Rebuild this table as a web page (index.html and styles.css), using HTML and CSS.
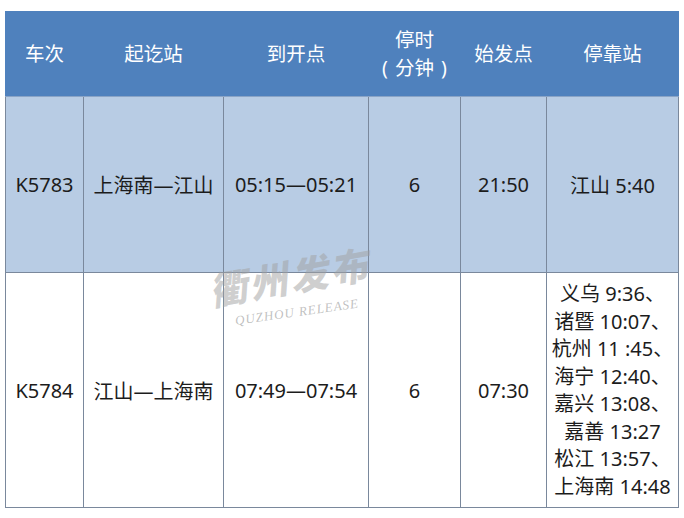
FILE: index.html
```html
<!DOCTYPE html>
<html lang="zh-CN">
<head>
<meta charset="utf-8">
<title>K5783 / K5784</title>
<link rel="stylesheet" href="styles.css">
</head>
<body>
<div class="wrap">
  <table class="tt">
    <colgroup>
      <col class="c1"><col class="c2"><col class="c3"><col class="c4"><col class="c5"><col class="c6">
    </colgroup>
    <thead>
      <tr class="head">
        <th>车次</th>
        <th>起讫站</th>
        <th>到开点</th>
        <th>停时<br><span class="paren">(</span> 分钟 <span class="paren">)</span></th>
        <th>始发点</th>
        <th>停靠站</th>
      </tr>
    </thead>
    <tbody>
      <tr class="r1">
        <td>K5783</td>
        <td>上海南—江山</td>
        <td>05:15—05:21</td>
        <td>6</td>
        <td>21:50</td>
        <td>江山 5:40</td>
      </tr>
      <tr class="r2">
        <td>K5784</td>
        <td>江山—上海南</td>
        <td>07:49—07:54</td>
        <td>6</td>
        <td>07:30</td>
        <td class="stops">义乌 9:36、<br>诸暨 10:07、<br>杭州 11&nbsp;:45、<br>海宁 12:40、<br>嘉兴 13:08、<br>嘉善 13:27<br>松江 13:57、<br>上海南 14:48</td>
      </tr>
    </tbody>
  </table>
  <div class="wm">
    <div class="wm-cn">衢州发布</div>
    <div class="wm-en">QUZHOU RELEASE</div>
  </div>
</div>
</body>
</html>
```

FILE: styles.css
```css
html, body {
  margin: 0;
  padding: 0;
  background: #ffffff;
}

.wrap {
  position: relative;
  padding: 11px 0 0 5px;
  width: 684px;
  height: 518px;
  box-sizing: border-box;
}

.tt {
  border-collapse: collapse;
  table-layout: fixed;
  width: 673px;
  font-family: "Noto Sans", "Noto Sans CJK SC", sans-serif;
  font-size: 20px;
  color: #1c1c1c;
}

.c1 { width: 78px; }
.c2 { width: 140px; }
.c3 { width: 145px; }
.c4 { width: 92px; }
.c5 { width: 86px; }
.c6 { width: 132px; }

.tt th,
.tt td {
  border: 1px solid #7a889c;
  text-align: center;
  vertical-align: middle;
  padding: 0;
  white-space: nowrap;
}

.head th {
  background: #4f81bd;
  color: #ffffff;
  font-weight: normal;
  font-size: 19.5px;
  height: 84px;
  line-height: 28px;
  border-color: #4f81bd;
  border-bottom-color: #8aa4c6;
}

.paren {
  display: inline-block;
  padding: 0 2px;
}

.r1 td {
  background: #b8cce4;
  height: 175px;
}

.r2 td {
  background: #ffffff;
  height: 234px;
}

.stops {
  line-height: 27.5px;
}

.wm {
  position: absolute;
  left: 208px;
  top: 255px;
  width: 170px;
  height: 76px;
  pointer-events: none;
}

.wm-cn {
  font-family: "Noto Sans CJK SC", sans-serif;
  font-weight: 900;
  font-size: 38px;
  letter-spacing: 3px;
  color: rgba(160, 160, 160, 0.5);
  transform: rotate(-10deg) skewX(-14deg);
  transform-origin: left top;
  margin-top: 14px;
  margin-left: 6px;
  line-height: 40px;
}

.wm-en {
  font-family: "Liberation Serif", serif;
  font-style: italic;
  font-size: 13px;
  letter-spacing: 1px;
  color: rgba(150, 150, 150, 0.6);
  transform: rotate(-8deg);
  transform-origin: left top;
  margin-left: 26px;
  margin-top: 4px;
}
```
